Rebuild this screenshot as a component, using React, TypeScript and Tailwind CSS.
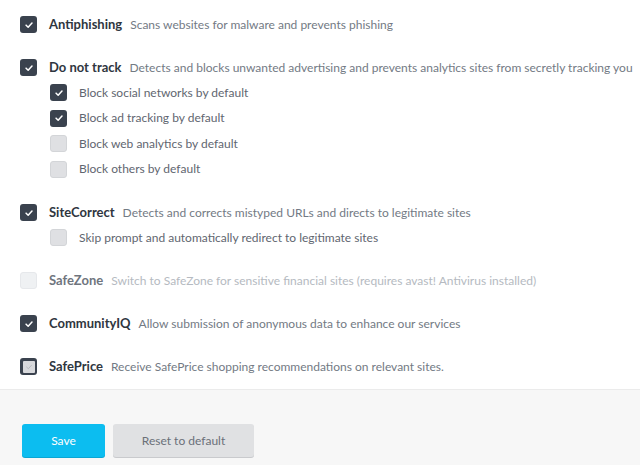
import type { ReactNode } from "react";

type BoxState = "checked" | "unchecked" | "disabled" | "partial";

function Box({ state }: { state: BoxState }) {
  if (state === "checked") {
    return (
      <span className="grid h-[17px] w-[17px] shrink-0 place-items-center rounded-[3px] bg-[#3a424e]">
        <svg viewBox="0 0 12 12" className="h-[10px] w-[10px]" fill="none">
          <path d="M2.5 6.2 L5 8.6 L9.6 3.6" stroke="#fff" strokeWidth="1.8" strokeLinecap="round" strokeLinejoin="round" />
        </svg>
      </span>
    );
  }
  if (state === "partial") {
    return (
      <span className="grid h-[17px] w-[17px] shrink-0 place-items-center rounded-[3px] bg-[#3a424e] p-[2.5px]">
        <span className="grid h-full w-full place-items-center rounded-[1px] bg-[#d8d9dc]">
          <svg viewBox="0 0 12 12" className="h-[8px] w-[8px]" fill="none">
            <path d="M2.5 6.2 L5 8.6 L9.6 3.6" stroke="#b4b7bc" strokeWidth="1.4" strokeLinecap="round" strokeLinejoin="round" />
          </svg>
        </span>
      </span>
    );
  }
  if (state === "disabled") {
    return <span className="h-[17px] w-[17px] shrink-0 rounded-[3px] border border-[#e6e8eb] bg-[#eff1f3]" />;
  }
  return <span className="h-[17px] w-[17px] shrink-0 rounded-[3px] border border-[#d3d5d8] bg-[#dfe0e3]" />;
}

function MainRow({
  state,
  title,
  desc,
  muted = false,
}: {
  state: BoxState;
  title: string;
  desc: string;
  muted?: boolean;
}) {
  return (
    <div className="flex h-[25px] items-center pl-5">
      <Box state={state} />
      <span
        className={`ml-3 shrink-0 whitespace-nowrap text-[13px] font-bold ${muted ? "text-[#6f757e]" : "text-[#2f3640]"}`}
      >
        {title}
      </span>
      <span className={`ml-2 whitespace-nowrap text-[12px] ${muted ? "text-[#b5bac1]" : "text-[#737a84]"}`}>{desc}</span>
    </div>
  );
}

function SubRow({ state, label, tall = true }: { state: BoxState; label: string; tall?: boolean }) {
  return (
    <div className={`flex items-center pl-[50px] ${tall ? "h-[25.5px]" : "h-[25px]"}`}>
      <Box state={state} />
      <span className="ml-3 text-[12px] text-[#5f6670]">{label}</span>
    </div>
  );
}

function Group({ children }: { children: ReactNode }) {
  return <div className="flex flex-col">{children}</div>;
}

export default function App() {
  return (
    <main className="flex h-[465px] w-[640px] flex-col overflow-hidden bg-white font-['Lato','Liberation_Sans',sans-serif]">
      <div className="flex flex-col gap-[18px] pt-3 pb-[10px]">
        <Group>
          <MainRow state="checked" title="Antiphishing" desc="Scans websites for malware and prevents phishing" />
        </Group>
        <Group>
          <MainRow
            state="checked"
            title="Do not track"
            desc="Detects and blocks unwanted advertising and prevents analytics sites from secretly tracking you"
          />
          <SubRow state="checked" label="Block social networks by default" />
          <SubRow state="checked" label="Block ad tracking by default" />
          <SubRow state="unchecked" label="Block web analytics by default" />
          <SubRow state="unchecked" label="Block others by default" />
        </Group>
        <Group>
          <MainRow state="checked" title="SiteCorrect" desc="Detects and corrects mistyped URLs and directs to legitimate sites" />
          <SubRow state="unchecked" label="Skip prompt and automatically redirect to legitimate sites" tall={false} />
        </Group>
        <Group>
          <MainRow
            state="disabled"
            muted
            title="SafeZone"
            desc="Switch to SafeZone for sensitive financial sites (requires avast! Antivirus installed)"
          />
        </Group>
        <Group>
          <MainRow state="checked" title="CommunityIQ" desc="Allow submission of anonymous data to enhance our services" />
        </Group>
        <Group>
          <MainRow state="partial" title="SafePrice" desc="Receive SafePrice shopping recommendations on relevant sites." />
        </Group>
      </div>
      <footer className="flex flex-1 items-start gap-2 border-t border-[#ebebeb] bg-[#f7f7f7] pl-[22px] pt-[34px]">
        <button className="h-[33px] w-[83px] rounded-[3px] bg-[#0cbdf0] text-[12px] text-white shadow-[0_1px_0_#0aa6d4]">
          Save
        </button>
        <button className="h-[33px] w-[141px] rounded-[3px] bg-[#e0e1e3] text-[12px] text-[#6b7079] shadow-[0_1px_0_#c9cacd]">
          Reset to default
        </button>
      </footer>
    </main>
  );
}
